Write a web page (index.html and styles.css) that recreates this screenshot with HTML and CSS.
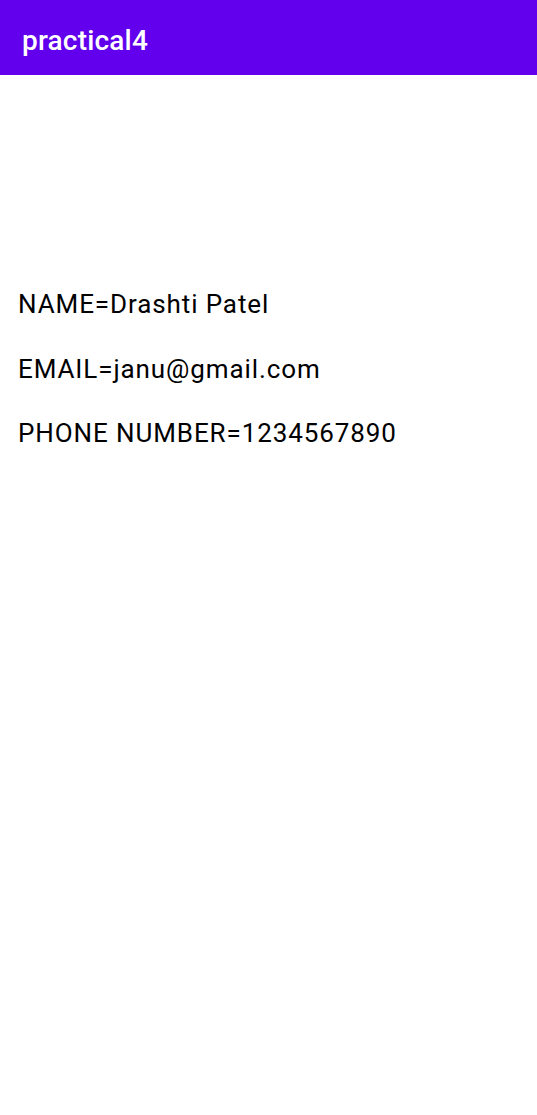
FILE: index.html
```html
<!DOCTYPE html>
<html>
<head>
<meta charset="utf-8">
<link rel="stylesheet" href="styles.css">
</head>
<body>
<header class="appbar"><span class="title">practical4</span></header>
<main class="content">
<p class="line">NAME=Drashti Patel</p>
<p class="line">EMAIL=janu@gmail.com</p>
<p class="line">PHONE NUMBER=1234567890</p>
</main>
</body>
</html>
```
FILE: styles.css
```css
html, body { margin: 0; padding: 0; background: #fff; }
body { font-family: Roboto, "Noto Sans", sans-serif; width: 537px; height: 1115px; }
.appbar {
  height: 75px;
  background: #6200ee;
  display: flex;
  align-items: center;
  padding: 6px 0 0 22px;
  box-sizing: border-box;
}
.title { color: #fff; font-size: 28px; font-weight: 500; letter-spacing: 0.2px; }
.content {
  padding: 213px 0 0 18px;
  display: flex;
  flex-direction: column;
  gap: 32.5px;
}
.line { margin: 0; font-size: 26px; line-height: 32px; letter-spacing: 0.9px; color: #000; }
```
